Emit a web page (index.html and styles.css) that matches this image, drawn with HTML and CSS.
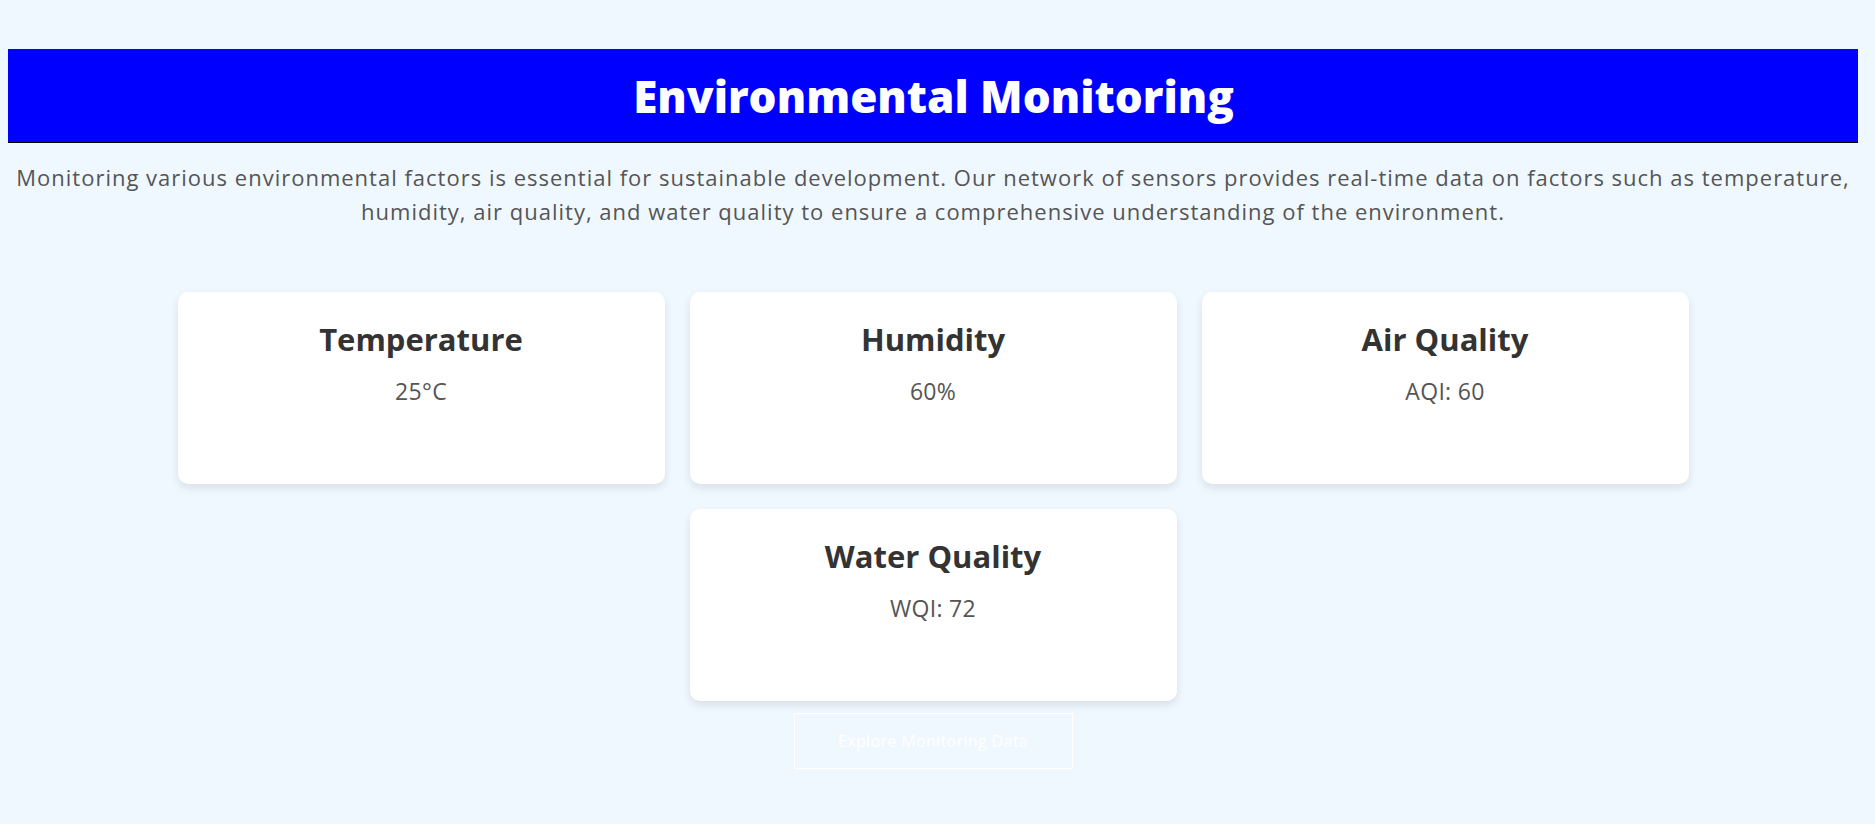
FILE: index.html
```html
<!DOCTYPE html>
<html lang="en">
<head>
<meta charset="utf-8">
<title>Environmental Monitoring</title>
<link rel="stylesheet" href="styles.css">
</head>
<body>
<header class="banner">
  <h1 class="banner-title">Environmental Monitoring</h1>
</header>
<p class="intro">Monitoring various environmental factors is essential for sustainable development. Our network of sensors provides real-time data on factors such as temperature, humidity, air quality, and water quality to ensure a comprehensive understanding of the environment.</p>
<section class="cards">
  <div class="card">
    <h2 class="card-title">Temperature</h2>
    <p class="card-value">25°C</p>
  </div>
  <div class="card">
    <h2 class="card-title">Humidity</h2>
    <p class="card-value">60%</p>
  </div>
  <div class="card">
    <h2 class="card-title">Air Quality</h2>
    <p class="card-value">AQI: 60</p>
  </div>
  <div class="card">
    <h2 class="card-title">Water Quality</h2>
    <p class="card-value">WQI: 72</p>
  </div>
</section>
<div class="actions">
  <button class="explore">Explore Monitoring Data</button>
</div>
</body>
</html>
```
FILE: styles.css
```css
html, body {
  background: #f0f8ff;
}
body {
  margin: 0;
  padding: 0 17px 0 8px;
  font-family: "Open Sans", "DejaVu Sans", sans-serif;
}
.banner {
  margin-top: 49px;
  height: 93px;
  background: #0000ff;
  border-bottom: 1px solid #000;
  display: flex;
  align-items: center;
  justify-content: center;
  padding-left: 1px;
}
.banner-title {
  margin: 0;
  color: #fff;
  font-size: 44px;
  font-weight: 800;
  line-height: 50px;
}
.intro {
  margin: 17px 0 0;
  text-align: center;
  font-size: 22px;
  line-height: 34px;
  letter-spacing: 1px;
  color: #555;
}
.cards {
  margin-top: 64px;
  display: flex;
  flex-wrap: wrap;
  justify-content: center;
  gap: 25px;
}
.card {
  width: 487px;
  height: 192px;
  box-sizing: border-box;
  padding-top: 27px;
  background: #fff;
  border-radius: 10px;
  box-shadow: 0 4px 8px rgba(0, 0, 0, 0.1);
  text-align: center;
}
.card-title {
  margin: 0;
  font-size: 31px;
  font-weight: 700;
  line-height: 40px;
  color: #333;
}
.card-value {
  margin: 17px 0 0;
  font-size: 23px;
  line-height: 30px;
  letter-spacing: 0.3px;
  color: #555;
}
.actions {
  display: flex;
  justify-content: center;
  margin-top: 12px;
}
.explore {
  width: 279px;
  height: 56px;
  background: transparent;
  border: 1px solid #fff;
  color: #fff;
  font-family: inherit;
  font-size: 16px;
  letter-spacing: 0.35px;
  cursor: pointer;
}
```
